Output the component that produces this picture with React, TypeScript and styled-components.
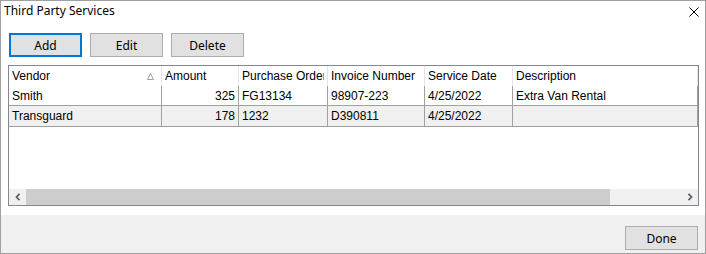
import styled, { createGlobalStyle } from "styled-components";

const GlobalStyle = createGlobalStyle`
  html, body {
    margin: 0;
    padding: 0;
    background: #ffffff;
  }
  * {
    box-sizing: border-box;
  }
`;

const Window = styled.div`
  width: 706px;
  height: 254px;
  border: 1px solid #a0a0a0;
  background: #ffffff;
  display: flex;
  flex-direction: column;
  font-family: "Segoe UI", "Noto Sans", sans-serif;
  font-size: 12px;
  color: #000000;
`;

const TitleBar = styled.div`
  height: 24px;
  display: flex;
  align-items: flex-start;
  justify-content: space-between;
  padding: 1px 6px 0 3px;
`;

const Title = styled.span`
  line-height: 18px;
`;

const CloseButton = styled.button`
  border: none;
  background: none;
  padding: 0;
  margin-top: 5px;
  width: 10px;
  height: 10px;
  display: flex;
  cursor: pointer;
`;

const Body = styled.div`
  height: 190px;
  padding: 8px 6px 0 7px;
  display: flex;
  flex-direction: column;
`;

const Toolbar = styled.div`
  display: flex;
  gap: 8px;
  margin-left: 1px;
`;

const Button = styled.button<{ $focused?: boolean }>`
  width: 73px;
  height: 24px;
  padding: 0;
  background: #e1e1e1;
  border: ${({ $focused }) =>
    $focused ? "2px solid #0078d7" : "1px solid #adadad"};
  font-family: "Segoe UI", "Noto Sans", sans-serif;
  font-size: 12px;
  color: #000000;
  cursor: pointer;
`;

const Grid = styled.div`
  margin-top: 8px;
  height: 141px;
  border: 1px solid #828790;
  display: flex;
  flex-direction: column;
  font-family: "Liberation Sans", Arial, sans-serif;
  font-size: 12px;
  overflow: hidden;
`;

const Row = styled.div<{ $current?: boolean; $header?: boolean }>`
  display: flex;
  height: ${({ $current }) => ($current ? "22px" : "20px")};
  margin-top: ${({ $current }) => ($current ? "-1px" : "0")};
  background: ${({ $current }) => ($current ? "#f0f0f0" : "#ffffff")};
  border-top: ${({ $current }) => ($current ? "1px solid #a0a0a0" : "none")};
  border-bottom: ${({ $current }) =>
    $current ? "1px solid #a0a0a0" : "none"};
`;

const Cell = styled.div<{ $width?: number; $right?: boolean; $header?: boolean }>`
  ${({ $width }) => ($width ? `width: ${$width}px;` : "flex: 1;")}
  flex-shrink: 0;
  display: flex;
  align-items: center;
  justify-content: ${({ $right }) => ($right ? "flex-end" : "flex-start")};
  padding: 0 3px;
  border-right: 1px solid
    ${({ $header }) => ($header ? "#e5e5e5" : "#a0a0a0")};
  white-space: nowrap;
  overflow: hidden;
`;

const HeaderLabel = styled.span`
  flex: 1;
  overflow: hidden;
`;

const SortArrow = styled.svg`
  margin-right: 4px;
  flex-shrink: 0;
`;

const Filler = styled.div`
  flex: 1;
`;

const ScrollBar = styled.div`
  height: 16px;
  display: flex;
  background: #f0f0f0;
`;

const ScrollButton = styled.div`
  width: 17px;
  display: flex;
  align-items: center;
  justify-content: center;
`;

const Track = styled.div`
  flex: 1;
  display: flex;
`;

const Thumb = styled.div`
  width: 584px;
  background: #cdcdcd;
`;

const Footer = styled.div`
  flex: 1;
  background: #f0f0f0;
  display: flex;
  justify-content: flex-end;
  align-items: flex-start;
  padding: 11px 7px 0 0;
`;

const widths = [153, 77, 89, 97, 88];

const columns = [
  "Vendor",
  "Amount",
  "Purchase Order",
  "Invoice Number",
  "Service Date",
  "Description",
];

const rows = [
  ["Smith", "325", "FG13134", "98907-223", "4/25/2022", "Extra Van Rental"],
  ["Transguard", "178", "1232", "D390811", "4/25/2022", ""],
];

const Chevron = ({ dir }: { dir: "left" | "right" }) => (
  <svg width="6" height="8" viewBox="0 0 6 8">
    <path
      d={dir === "left" ? "M4.5 0.8 L1.5 4 L4.5 7.2" : "M1.5 0.8 L4.5 4 L1.5 7.2"}
      fill="none"
      stroke="#606060"
      strokeWidth="1.8"
    />
  </svg>
);

export default function App() {
  return (
    <>
      <GlobalStyle />
      <Window>
        <TitleBar>
          <Title>Third Party Services</Title>
          <CloseButton aria-label="Close">
            <svg width="10" height="10" viewBox="0 0 10 10">
              <path d="M0.5 0.5 L9.5 9.5 M9.5 0.5 L0.5 9.5" stroke="#000" strokeWidth="1" />
            </svg>
          </CloseButton>
        </TitleBar>
        <Body>
          <Toolbar>
            <Button $focused>Add</Button>
            <Button>Edit</Button>
            <Button>Delete</Button>
          </Toolbar>
          <Grid>
            <Row>
              {columns.map((c, i) => (
                <Cell key={c} $width={widths[i]} $header>
                  <HeaderLabel>{c}</HeaderLabel>
                  {i === 0 && (
                    <SortArrow width="7" height="7" viewBox="0 0 7 7">
                      <path d="M3.5 0.5 L6.5 6.5 L0.5 6.5 Z" fill="none" stroke="#a0a0a0" />
                    </SortArrow>
                  )}
                </Cell>
              ))}
            </Row>
            {rows.map((r, ri) => (
              <Row key={ri} $current={ri === 1}>
                {r.map((v, i) => (
                  <Cell key={i} $width={widths[i]} $right={i === 1}>
                    {v}
                  </Cell>
                ))}
              </Row>
            ))}
            <Filler />
            <ScrollBar>
              <ScrollButton>
                <Chevron dir="left" />
              </ScrollButton>
              <Track>
                <Thumb />
              </Track>
              <ScrollButton>
                <Chevron dir="right" />
              </ScrollButton>
            </ScrollBar>
          </Grid>
        </Body>
        <Footer>
          <Button>Done</Button>
        </Footer>
      </Window>
    </>
  );
}
